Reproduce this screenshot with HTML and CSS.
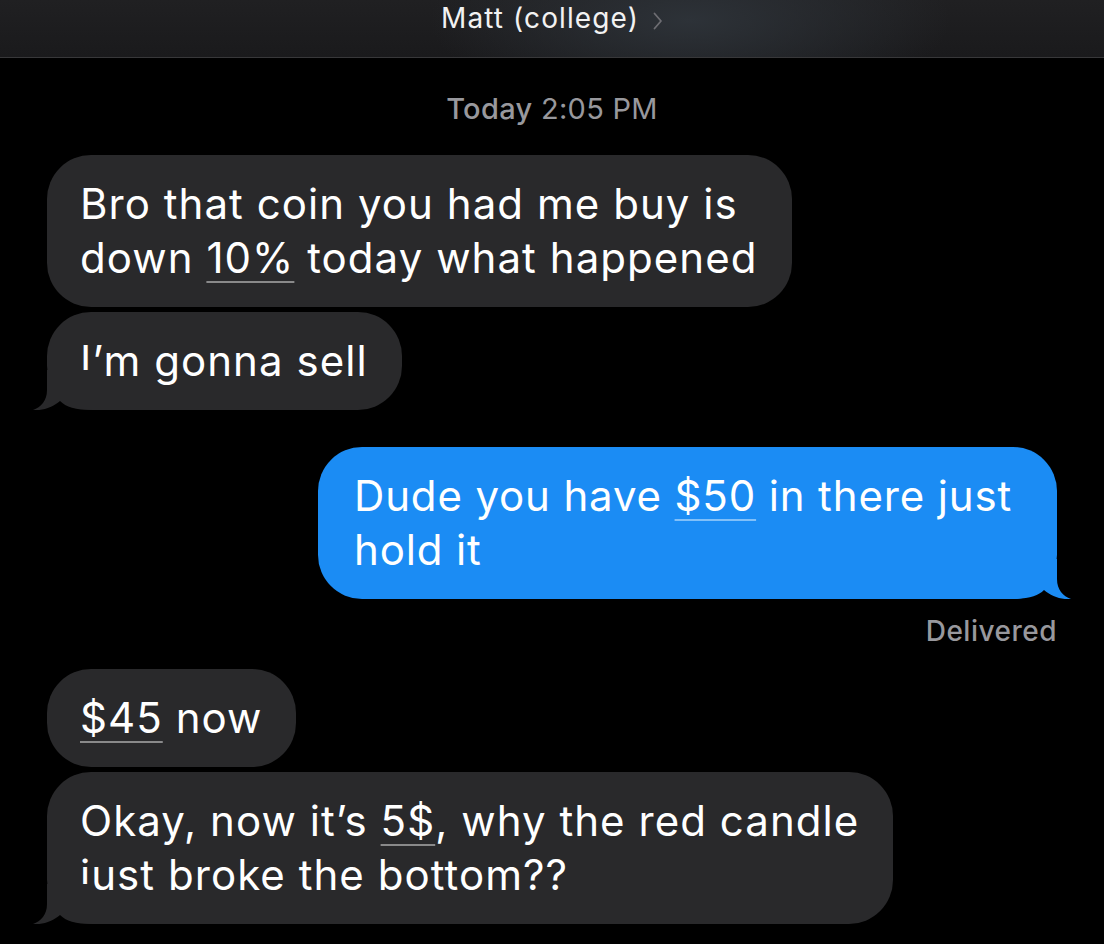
FILE: index.html
```html
<!DOCTYPE html>
<html lang="en">

<head>
  <meta charset="UTF-8">
  <meta name="viewport" content="width=device-width, initial-scale=1.0">
  <title>Matt (college)</title>
  <link rel="stylesheet" href="styles.css">
</head>

<body>

  <div class="header">
    <span class="title">Matt (college)</span>
    <svg class="chevron" width="10" height="18" viewBox="0 0 10 18">
      <path d="M1.5 1.5 L8 9 L1.5 16.5" fill="none" stroke="#6d6d72" stroke-width="1.8" stroke-linecap="round" stroke-linejoin="round" />
    </svg>
  </div>

  <div class="thread">
    <div class="stamp"><b>Today</b> 2:05 PM</div>

    <div class="row">
      <div class="bubble in">Bro that coin you had me buy is<br>down <span class="link">10%</span> today what happened</div>
    </div>
    <div class="row">
      <div class="bubble in tail">I’m gonna sell
        <svg class="tail-shape" width="60" height="40" viewBox="0 0 60 40">
          <path d="M14 0 L14 20 C14 31 8 37 0 40 C10 41 20 37 27 31 C33 37 42 40 60 40 L60 0 Z" />
        </svg>
      </div>
    </div>

    <div class="row out-row">
      <div class="bubble out tail">Dude you have <span class="link">$50</span> in there just<br>hold it
        <svg class="tail-shape" width="60" height="40" viewBox="0 0 60 40">
          <path d="M14 0 L14 20 C14 31 8 37 0 40 C10 41 20 37 27 31 C33 37 42 40 60 40 L60 0 Z" />
        </svg>
      </div>
    </div>
    <div class="status">Delivered</div>

    <div class="row">
      <div class="bubble in"><span class="link">$45</span> now</div>
    </div>
    <div class="row">
      <div class="bubble in tail">Okay, now it’s <span class="link">5$</span>, why the red candle<br>just broke the bottom??
        <svg class="tail-shape" width="60" height="40" viewBox="0 0 60 40">
          <path d="M14 0 L14 20 C14 31 8 37 0 40 C10 41 20 37 27 31 C33 37 42 40 60 40 L60 0 Z" />
        </svg>
      </div>
    </div>
  </div>

</body>

</html>
```

FILE: styles.css
```css
body {
  margin: 0;
  background-color: #000;
  color: #fff;
  font-family: Inter, "Open Sans", sans-serif;
  height: 944px;
  overflow: hidden;
}

.header {
  height: 57px;
  display: flex;
  justify-content: center;
  align-items: flex-start;
  gap: 14px;
  background: radial-gradient(ellipse 260px 90px at 690px 20px, #2d3238 0%, rgba(40, 40, 42, 0) 100%),
    linear-gradient(#202022, #1a1a1c);
  border-bottom: 1px solid #38383a;
}

.title {
  font-size: 28px;
  line-height: 28px;
  margin-top: 4px;
  letter-spacing: 1.1px;
  color: #f2f2f2;
}

.chevron {
  margin-top: 12px;
}

.thread {
  display: flex;
  flex-direction: column;
  padding: 0 47px;
}

.stamp {
  text-align: center;
  color: #98989d;
  font-size: 29px;
  line-height: 29px;
  letter-spacing: 0.3px;
  margin: 36px 0 32px;
}

.stamp b {
  font-weight: 500;
}

.row {
  display: flex;
  margin-bottom: 5px;
}

.out-row {
  justify-content: flex-end;
  margin-top: 32px;
  margin-bottom: 0;
}

.bubble {
  position: relative;
  font-size: 42px;
  line-height: 54px;
  padding: 22px 34px 22px 33px;
  border-radius: 44px;
  letter-spacing: 1.05px;
}

.in {
  background-color: #29292b;
}

.out {
  background-color: #1b8cf4;
  padding-left: 36px;
  padding-right: 45px;
  letter-spacing: 0.85px;
}

.link {
  text-decoration: underline;
  text-decoration-color: rgba(255, 255, 255, 0.45);
  text-decoration-thickness: 2px;
  text-underline-offset: 8px;
}

.tail-shape {
  position: absolute;
  bottom: 0;
  left: -14px;
}

.in .tail-shape path {
  fill: #29292b;
}

.out .tail-shape {
  left: auto;
  right: -14px;
  transform: scaleX(-1);
}

.out .tail-shape path {
  fill: #1b8cf4;
}

.status {
  text-align: right;
  color: #98989d;
  font-size: 28px;
  font-weight: 500;
  line-height: 28px;
  letter-spacing: 0.5px;
  margin: 18px 0 24px;
}
```
